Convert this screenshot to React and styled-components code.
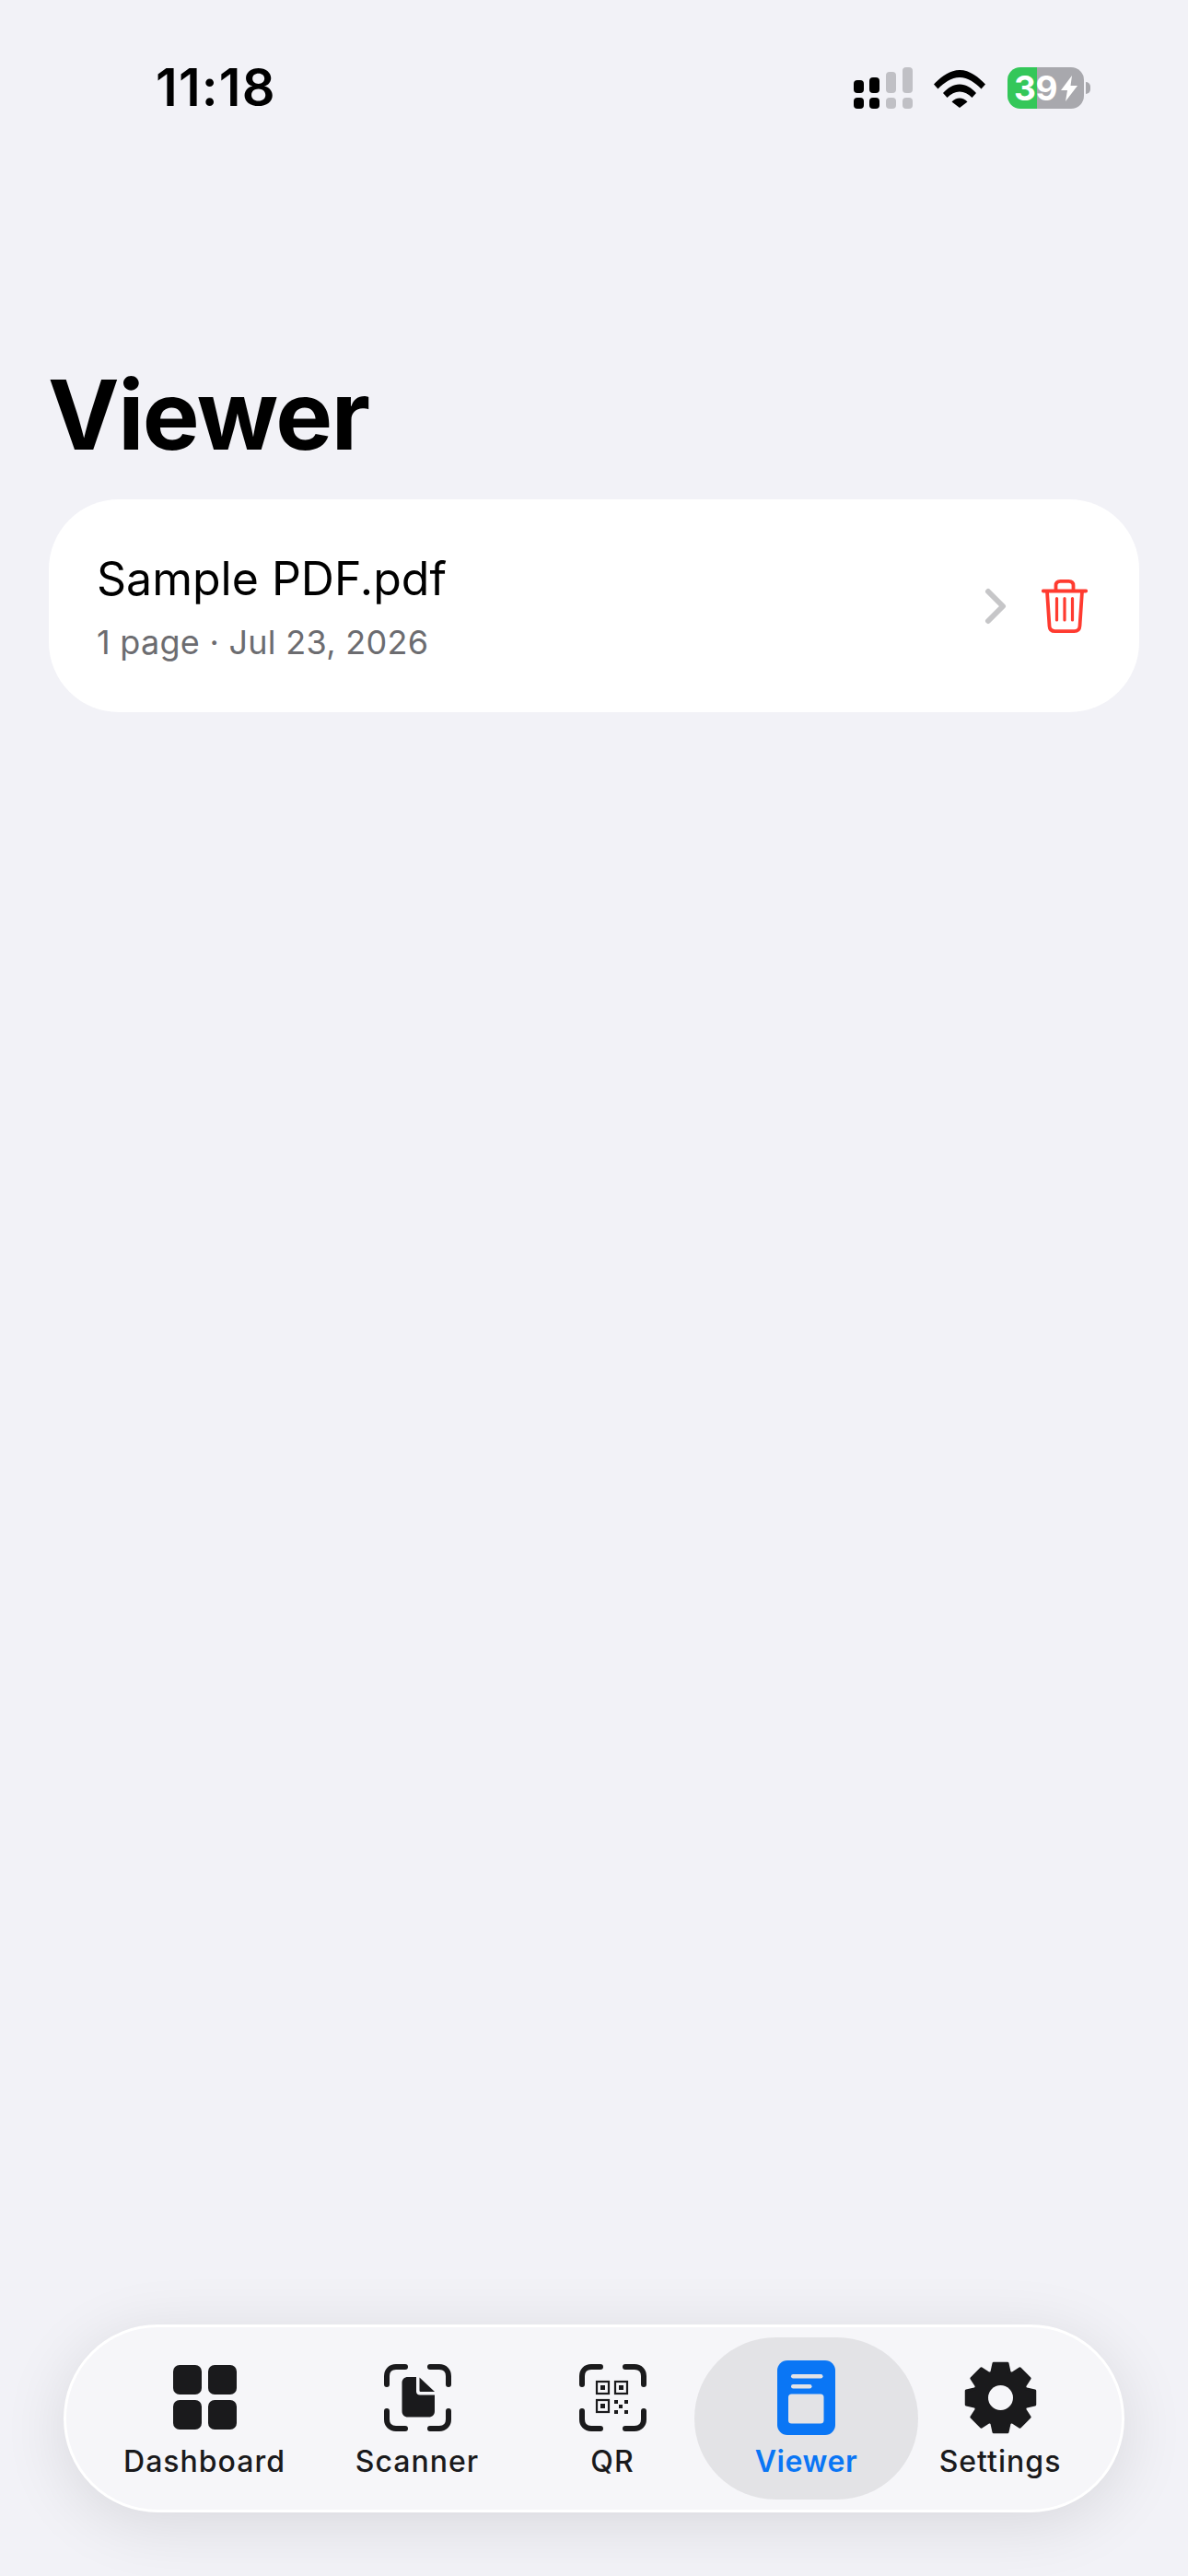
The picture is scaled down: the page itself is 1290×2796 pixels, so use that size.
import React from "react";
import styled, { createGlobalStyle } from "styled-components";

const Global = createGlobalStyle`
  html, body { margin: 0; padding: 0; background: #f2f2f7; }
  body { font-family: Inter, "Noto Sans", sans-serif; -webkit-font-smoothing: antialiased; }
`;

const Page = styled.div`
  width: 1290px;
  height: 2796px;
  display: flex;
  flex-direction: column;
  background: #f2f2f7;
  overflow: hidden;
`;

const StatusBar = styled.div`
  height: 389px;
  box-sizing: border-box;
  padding: 66px 106px 0 169px;
  display: flex;
  justify-content: space-between;
  align-items: flex-start;
`;

const Time = styled.div`
  font-size: 56px;
  font-weight: 600;
  line-height: 58px;
  color: #000;
  letter-spacing: 1.2px;
`;

const StatusIcons = styled.div`
  display: flex;
  align-items: flex-start;
  margin-top: 7px;
`;

const Battery = styled.div`
  width: 83px;
  height: 45px;
  border-radius: 14px;
  margin-left: 24px;
  background: linear-gradient(90deg, #34c759 0 32px, #a8a8ad 32px 100%);
  color: #fff;
  font-size: 37px;
  font-weight: 700;
  line-height: 45px;
  display: flex;
  align-items: center;
  padding-left: 7px;
  box-sizing: border-box;
  letter-spacing: -0.5px;
`;

const BatteryNub = styled.div`
  width: 5px;
  height: 13px;
  margin: 16px 0 0 2px;
  border-radius: 0 5px 5px 0;
  background: #a8a8ad;
`;

const Title = styled.h1`
  margin: 0;
  padding-left: 52px;
  font-size: 104px;
  font-weight: 700;
  line-height: 122px;
  color: #000;
  letter-spacing: -1.5px;
`;

const Card = styled.div`
  margin: 31px 53px 0 53px;
  height: 231px;
  background: #fff;
  border-radius: 76px;
  display: flex;
  align-items: center;
  padding: 0 56px 0 52px;
`;

const CardText = styled.div`
  flex: 1;
  display: flex;
  flex-direction: column;
  gap: 16px;
`;

const FileName = styled.div`
  font-size: 50px;
  font-weight: 400;
  line-height: 62px;
  color: #000;
`;

const FileMeta = styled.div`
  font-size: 36px;
  line-height: 44px;
  color: #6c6c70;
  letter-spacing: 0.27px;
`;

const CardActions = styled.div`
  display: flex;
  align-items: center;
  gap: 38px;
`;

const TabBar = styled.nav`
  margin: auto 69px 69px 69px;
  height: 204px;
  box-sizing: border-box;
  border: 3px solid #fff;
  border-radius: 102px;
  background: #f6f6f9;
  box-shadow: 0 12px 70px rgba(0, 0, 0, 0.11);
  display: flex;
  align-items: center;
  padding-left: 55px;
`;

const Tab = styled.div`
  width: ${(p) => p.$w}px;
  margin-left: ${(p) => p.$ml || 0}px;
  height: 176px;
  box-sizing: border-box;
  border-radius: 88px;
  background: ${(p) => (p.$active ? "#e3e3e6" : "transparent")};
  color: ${(p) => (p.$active ? "#0a76f5" : "#1a1a1c")};
  display: flex;
  flex-direction: column;
  align-items: center;
  flex-shrink: 0;
`;

const IconSlot = styled.div`
  height: 108px;
  display: flex;
  align-items: center;
  padding-top: 22px;
  box-sizing: border-box;
`;

const TabLabel = styled.div`
  font-size: 32px;
  font-weight: ${(p) => (p.$active ? 600 : 500)};
  line-height: 40px;
  letter-spacing: ${(p) => (p.$active ? 0.6 : 1)}px;
  margin-top: 7px;
`;

const Signal = () => (
  <svg width="64" height="46" viewBox="0 0 64 46">
    <g fill="#000">
      <rect x="0" y="14" width="11" height="14" rx="4" />
      <rect x="17" y="11" width="11" height="17" rx="4" />
      <rect x="0" y="33" width="11" height="12" rx="4" />
      <rect x="17" y="33" width="11" height="12" rx="4" />
    </g>
    <g fill="#c0c0c5">
      <rect x="35" y="5" width="11" height="23" rx="4" />
      <rect x="53" y="0" width="11" height="28" rx="4" />
      <rect x="35" y="33" width="11" height="12" rx="4" />
      <rect x="53" y="33" width="11" height="12" rx="4" />
    </g>
  </svg>
);

const Wifi = () => (
  <svg width="56" height="42" viewBox="0 0 56 42" style={{ margin: "2px 0 0 23px" }}>
    <path d="M0 16.5C7 9 17 1 28 1s21 8 28 15.500l-4.500 5C45 15 37 9 28 9S11 15 4.500 21.500z" fill="#000" />
    <path d="M10 26C15 20.500 21 16.500 28 16.500S41 20.500 46 26l-4.500 5C37.500 27 33 24.500 28 24.500S18.500 27 14.500 31z" fill="#000" />
    <path d="M19.500 35.500C22 33 25 31.500 28 31.500s6 1.500 8.500 4L28 42z" fill="#000" />
  </svg>
);

const Bolt = () => (
  <svg width="20" height="28" viewBox="0 0 20 28" style={{ marginLeft: 3 }}>
    <path d="M13 0L1 16h7L6 28l13-17h-7.500z" fill="#fff" />
  </svg>
);

const Chevron = () => (
  <svg width="24" height="40" viewBox="0 0 24 40">
    <path d="M4 4l16 16L4 36" fill="none" stroke="#c6c6c8" strokeWidth="6" strokeLinecap="round" strokeLinejoin="round" />
  </svg>
);

const Trash = () => (
  <svg width="50" height="58" viewBox="0 0 50 58" fill="none" stroke="#ff3b30" strokeWidth="3.800" strokeLinecap="round" strokeLinejoin="round">
    <path d="M1.800 12.500h46.400" />
    <path d="M15.500 12V6.500C15.500 3.500 17.500 1.900 20.500 1.900h9c3 0 5 1.600 5 4.600V12" />
    <path d="M6 13l2.500 37.500c.2 3.500 2.500 5.600 6 5.600h21c3.500 0 5.800-2.100 6-5.600L44 13" />
    <path d="M16.500 20.500v23.500M25 20.500v23.500M33.500 20.500v23.500" strokeWidth="3.200" />
  </svg>
);

const DashIcon = () => (
  <svg width="69" height="70" viewBox="0 0 69 70" fill="currentColor">
    <rect x="0" y="0" width="31" height="32" rx="7" />
    <rect x="38" y="0" width="31" height="32" rx="7" />
    <rect x="0" y="38" width="31" height="32" rx="7" />
    <rect x="38" y="38" width="31" height="32" rx="7" />
  </svg>
);

const Corners = () => (
  <path
    d="M3 22V13C3 7 7 3 13 3H23M50 3H60C66 3 70 7 70 13V22M70 51V60C70 66 66 70 60 70H50M23 70H13C7 70 3 66 3 60V51"
    fill="none"
    stroke="currentColor"
    strokeWidth="6"
    strokeLinecap="round"
  />
);

const ScanIcon = () => (
  <svg width="73" height="73" viewBox="0 0 73 73">
    <Corners />
    <path d="M26 14h9v15.500c0 2.500 1.500 4 4 4h16V51c0 4-2.500 6.500-6.500 6.500h-22.500c-4 0-6.500-2.500-6.500-6.500V20.500c0-4 2.500-6.500 6.500-6.500z" fill="currentColor" />
    <path d="M38.500 14.500L55 30H40c-1 0-1.500-.5-1.500-1.500z" fill="currentColor" />
  </svg>
);

const QrFinder = ({ x, y }) => (
  <g>
    <rect x={x + 1} y={y + 1} width="13" height="13" fill="none" stroke="currentColor" strokeWidth="2.200" />
    <rect x={x + 5} y={y + 5} width="5" height="5" fill="currentColor" />
  </g>
);

const QrIcon = () => (
  <svg width="73" height="73" viewBox="0 0 73 73">
    <Corners />
    <QrFinder x={18} y={18} />
    <QrFinder x={38} y={18} />
    <QrFinder x={18} y={38} />
    <g fill="currentColor">
      <rect x="38" y="39" width="4" height="4" />
      <rect x="49" y="39" width="4" height="4" />
      <rect x="43" y="44" width="4" height="4" />
      <rect x="38" y="50" width="4" height="4" />
      <rect x="49" y="50" width="4" height="4" />
    </g>
  </svg>
);

const ViewerIcon = () => (
  <svg width="63" height="81" viewBox="0 0 63 81">
    <rect width="63" height="81" rx="11" fill="currentColor" />
    <rect x="15" y="15" width="34.500" height="4.500" rx="2.250" fill="#e3e3e6" />
    <rect x="15" y="26" width="22.500" height="4.500" rx="2.250" fill="#e3e3e6" />
    <rect x="12" y="36.500" width="38.500" height="32" rx="3.500" fill="#e3e3e6" />
  </svg>
);

function gearPath() {
  const c = 39.5;
  const pts = [];
  for (let i = 0; i < 8; i++) {
    const a = (i * Math.PI) / 4 - Math.PI / 2;
    const p = (r, d) => [c + r * Math.cos(a + d), c + r * Math.sin(a + d)];
    pts.push(p(29, -0.34), p(38, -0.2), p(38, 0.2), p(29, 0.34));
  }
  return "M" + pts.map((q) => q[0].toFixed(2) + " " + q[1].toFixed(2)).join("L") + "Z";
}

const GearIcon = () => (
  <svg width="79" height="79" viewBox="0 0 79 79">
    <path d={gearPath()} fill="currentColor" stroke="currentColor" strokeWidth="3" strokeLinejoin="round" />
    <circle cx="39.500" cy="39.500" r="13.500" fill="#f6f6f9" />
  </svg>
);

const tabs = [
  { label: "Dashboard", icon: <DashIcon />, w: 190 },
  { label: "Scanner", icon: <ScanIcon />, w: 272 },
  { label: "QR", icon: <QrIcon />, w: 152 },
  { label: "Viewer", icon: <ViewerIcon />, w: 243, ml: 13, active: true },
  { label: "Settings", icon: <GearIcon />, w: 178 },
];

export default function App() {
  return (
    <Page>
      <Global />
      <StatusBar>
        <Time>11:18</Time>
        <StatusIcons>
          <Signal />
          <Wifi />
          <Battery>39<Bolt /></Battery>
          <BatteryNub />
        </StatusIcons>
      </StatusBar>
      <Title>Viewer</Title>
      <Card>
        <CardText>
          <FileName>Sample PDF.pdf</FileName>
          <FileMeta>1 page · Jul 23, 2026</FileMeta>
        </CardText>
        <CardActions>
          <Chevron />
          <Trash />
        </CardActions>
      </Card>
      <TabBar>
        {tabs.map((t) => (
          <Tab key={t.label} $w={t.w} $ml={t.ml} $active={t.active}>
            <IconSlot>{t.icon}</IconSlot>
            <TabLabel $active={t.active}>{t.label}</TabLabel>
          </Tab>
        ))}
      </TabBar>
    </Page>
  );
}
